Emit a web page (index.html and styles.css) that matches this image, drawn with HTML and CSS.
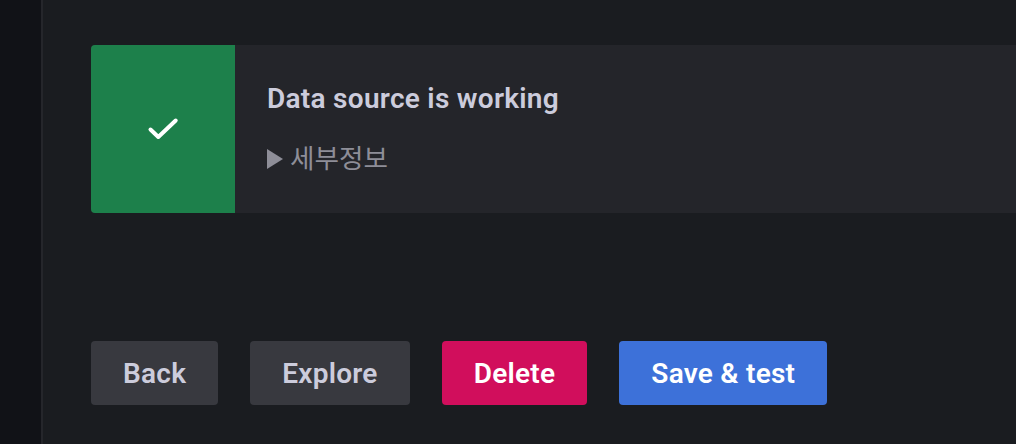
FILE: index.html
```html
<!DOCTYPE html>
<html lang="ko">

<head>
    <meta charset="UTF-8">
    <meta name="viewport" content="width=device-width, initial-scale=1.0">
    <title>Data source</title>
    <link rel="stylesheet" href="styles.css">
</head>

<body>
    <div class="sidebar"></div>
    <div class="main">
        <div class="alert">
            <div class="alert-icon">
                <svg width="48" height="48" viewBox="0 0 48 48">
                    <path d="M11.5 24.5 L19.3 32 L36.7 15.5" fill="none" stroke="#fff" stroke-width="4" stroke-linecap="round" stroke-linejoin="round" />
                </svg>
            </div>
            <div class="alert-body">
                <div class="alert-title">Data source is working</div>
                <div class="alert-details"><span class="arrow"></span>세부정보</div>
            </div>
        </div>
        <div class="buttons">
            <button class="btn btn-secondary">Back</button>
            <button class="btn btn-secondary">Explore</button>
            <button class="btn btn-danger">Delete</button>
            <button class="btn btn-primary">Save &amp; test</button>
        </div>
    </div>
</body>

</html>
```

FILE: styles.css
```css
html,
body {
    height: 100%;
}

body {
    margin: 0;
    display: flex;
    overflow: hidden;
    background-color: #1a1c20;
    font-family: Roboto, "Noto Sans CJK KR", sans-serif;
}

.sidebar {
    width: 41px;
    flex-shrink: 0;
    background-color: #111217;
    border-right: 2px solid #25262b;
}

.main {
    flex: 1;
    padding: 45px 0 0 48px;
}

.alert {
    display: flex;
    height: 168px;
    background-color: #24252a;
    border-radius: 4px 0 0 4px;
    overflow: hidden;
}

.alert-icon {
    width: 144px;
    display: flex;
    justify-content: center;
    align-items: center;
    background-color: #1d804b;
}

.alert-body {
    padding: 36px 32px;
}

.alert-title {
    font-size: 28px;
    font-weight: 600;
    letter-spacing: 0.28px;
    line-height: 36px;
    color: #ccccdc;
}

.alert-details {
    display: flex;
    align-items: center;
    margin-top: 24px;
    font-size: 26.6px;
    line-height: 36px;
    color: #8e8e98;
}

.arrow {
    width: 0;
    height: 0;
    margin-right: 7px;
    border-left: 16px solid #8e8e98;
    border-top: 10px solid transparent;
    border-bottom: 10px solid transparent;
}

.buttons {
    display: flex;
    gap: 32px;
    margin-top: 128px;
}

.btn {
    height: 64px;
    padding: 0 32px;
    border: none;
    border-radius: 4px;
    font-family: inherit;
    font-size: 28px;
    font-weight: 600;
    letter-spacing: 0.25px;
    cursor: pointer;
}

.btn-secondary {
    background-color: #38393f;
    color: #ccccdc;
}

.btn-danger {
    background-color: #d10e5c;
    color: #fff;
}

.btn-primary {
    background-color: #3d71d9;
    color: #fff;
}
```
